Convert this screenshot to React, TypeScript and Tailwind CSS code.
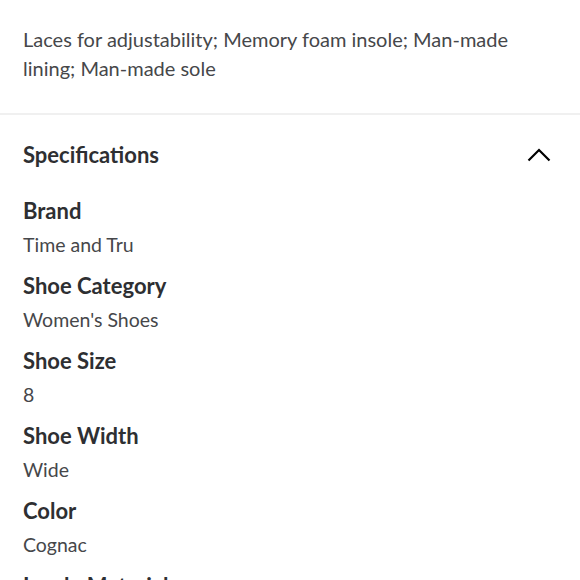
const specs = [
  { label: 'Brand', value: 'Time and Tru' },
  { label: 'Shoe Category', value: "Women's Shoes" },
  { label: 'Shoe Size', value: '8' },
  { label: 'Shoe Width', value: 'Wide' },
  { label: 'Color', value: 'Cognac' },
  { label: 'Insole Material', value: 'Memory Foam' },
]

export default function App() {
  return (
    <div className="w-[580px] h-[580px] overflow-hidden bg-white font-['Lato',sans-serif]">
      {/* Description */}
      <div className="px-[23px] pt-[25px] pb-[30px] border-b-2 border-[#f0f0f0]">
        <p className="text-[20px] leading-[29px] text-[#46474a]">
          Laces for adjustability; Memory foam insole; Man-made lining; Man-made sole
        </p>
      </div>

      {/* Specifications */}
      <div className="px-[23px]">
        <div className="flex items-center justify-between pt-[20px] pb-[18px]">
          <h2 className="text-[22px] leading-[40px] font-bold text-[#2e2f32]">Specifications</h2>
          <svg className="w-[24px] h-[14px] mr-[6px]" viewBox="0 0 24 14" fill="none" stroke="#000" strokeWidth={2.2}>
            <path d="M1.5 12.5L12 2l10.5 10.5" />
          </svg>
        </div>
        <div>
          {specs.map((s) => (
            <div key={s.label} className="mb-[7px]">
              <div className="text-[22px] leading-[36px] font-bold text-[#2e2f32]">{s.label}</div>
              <div className="text-[19.5px] leading-[32px] text-[#46474a]">{s.value}</div>
            </div>
          ))}
        </div>
      </div>
    </div>
  )
}
